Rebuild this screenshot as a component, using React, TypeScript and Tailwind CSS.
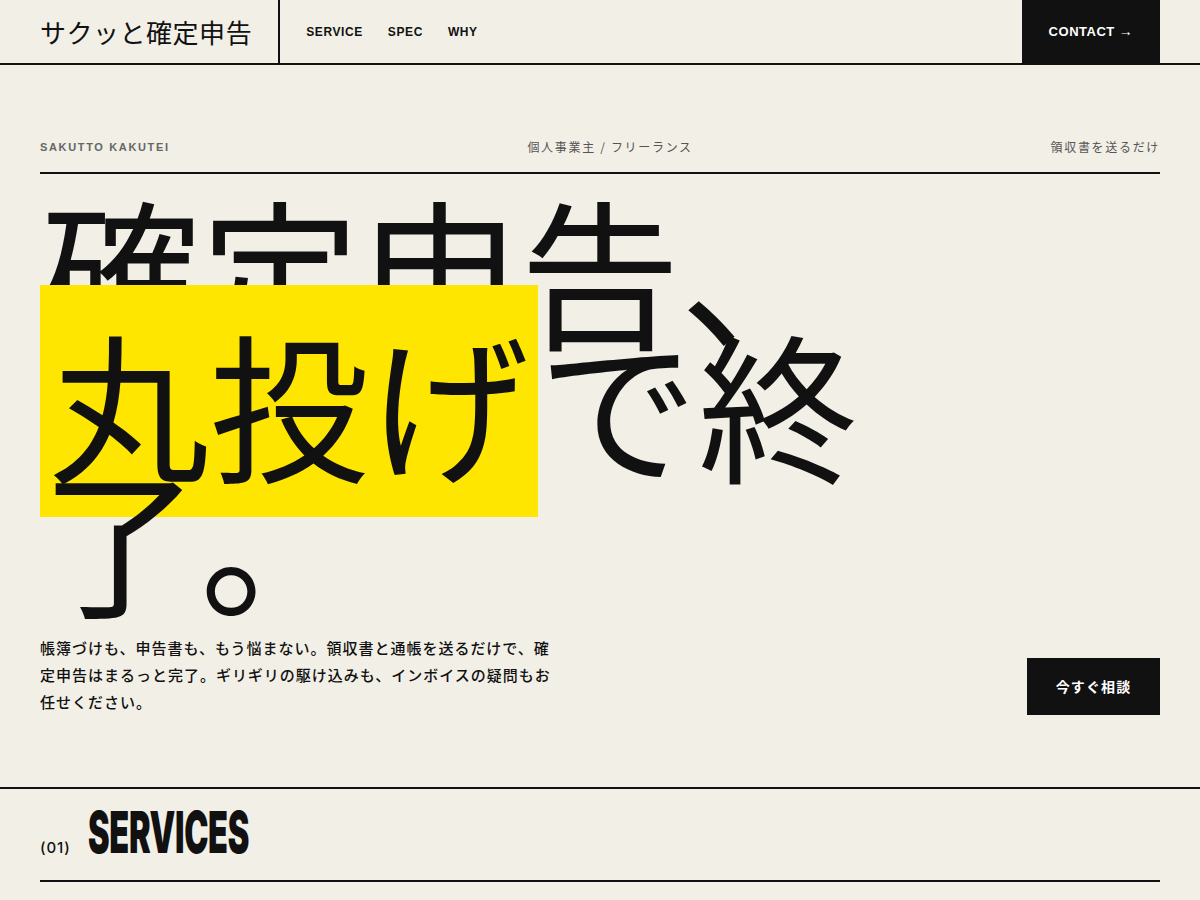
import React from "react";

const JP = "font-['Noto_Sans_CJK_JP','Noto_Sans',sans-serif]";
const LAT = "font-['Liberation_Sans','Noto_Sans_CJK_JP',sans-serif]";

const NAV_ITEMS = ["SERVICE", "SPEC", "WHY"];

const Header: React.FC = () => (
  <header className="flex h-[65px] items-stretch border-b-2 border-[#111] px-10">
    <div className="flex items-center border-r-2 border-[#111] pr-[26px]">
      <span className={`${JP} text-[26px] font-normal tracking-[0.02em] text-[#111]`}>
        サクッと確定申告
      </span>
    </div>
    <nav className="flex items-center gap-[25px] pl-[26px]">
      {NAV_ITEMS.map((item) => (
        <a
          key={item}
          className={`${LAT} text-[12px] font-bold tracking-[0.05em] text-[#111]`}
        >
          {item}
        </a>
      ))}
    </nav>
    <a
      className={`${LAT} ml-auto flex w-[138px] items-center justify-center bg-[#111] text-[13px] font-bold tracking-[0.04em] text-white`}
    >
      CONTACT <span className="ml-1 text-[14px]">→</span>
    </a>
  </header>
);

const Hero: React.FC = () => (
  <section className="border-b-2 border-[#111] px-10 pb-[72px] pt-[74px]">
    <div className="flex items-center justify-between border-b-2 border-[#111] pb-[17px] leading-4">
      <span className={`${LAT} text-[11px] font-bold tracking-[0.15em] text-[#666]`}>
        SAKUTTO KAKUTEI
      </span>
      <span className={`${JP} text-[12px] tracking-[0.14em] text-[#555]`}>
        個人事業主 / フリーランス
      </span>
      <span className={`${JP} text-[12px] tracking-[0.14em] text-[#555]`}>
        領収書を送るだけ
      </span>
    </div>

    <h1
      className={`${JP} mt-[26px] text-[160px] font-normal leading-[0.84] tracking-normal text-[#111]`}
    >
      確定申告、
      <br />
      <span className="bg-[#ffe600] px-[9px]">丸投げ</span>で終了。
    </h1>

    <div className="mt-[31px] flex items-end justify-between">
      <p
        className={`${JP} w-[516px] text-[15px] font-medium leading-[27px] tracking-[0.066em] text-[#111]`}
      >
        帳簿づけも、申告書も、もう悩まない。領収書と通帳を送るだけで、確定申告はまるっと完了。ギリギリの駆け込みも、インボイスの疑問もお任せください。
      </p>
      <button
        className={`${JP} h-[57px] w-[133px] bg-[#111] text-[14px] font-bold tracking-[0.08em] text-white`}
      >
        今すぐ相談
      </button>
    </div>
  </section>
);

const ServicesHeading: React.FC = () => (
  <section className="px-10">
    <div className="flex items-baseline gap-[17px] border-b-2 border-[#111] pb-[19px] pt-[14px]">
      <span className="font-['Inter',sans-serif] text-[15px] font-medium tracking-[0.06em] text-[#111]">
        (01)
      </span>
      <h2 className="inline-block origin-left scale-x-[0.56] font-['Inter',sans-serif] text-[58px] font-black leading-none tracking-[-0.01em] text-[#111]">
        SERVICES
      </h2>
    </div>
  </section>
);

const App: React.FC = () => (
  <div className="min-h-screen bg-[#f2efe7] text-[#111]">
    <Header />
    <Hero />
    <ServicesHeading />
  </div>
);

export default App;
